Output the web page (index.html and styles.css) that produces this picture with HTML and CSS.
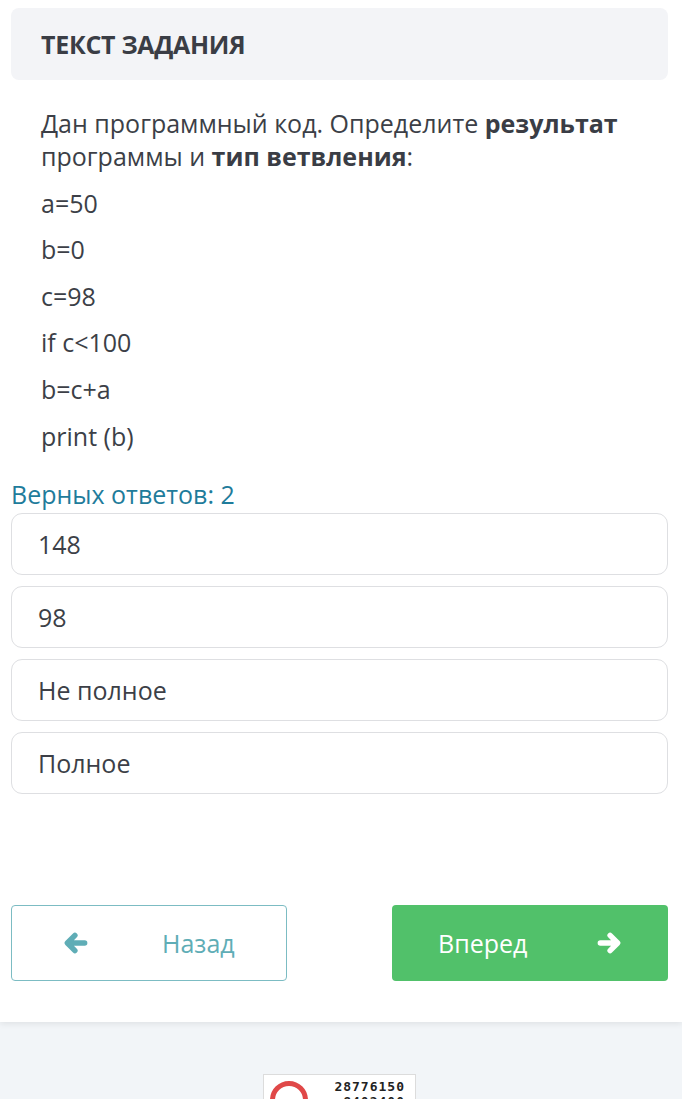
FILE: index.html
```html
<!DOCTYPE html>
<html lang="ru">
<head>
<meta charset="utf-8">
<title>Текст задания</title>
<link rel="stylesheet" href="styles.css">
</head>
<body>
<div class="page">
  <div class="task-head"><h1>ТЕКСТ ЗАДАНИЯ</h1></div>
  <div class="task-body">
    <p>Дан программный код. Определите <b>результат</b> программы и <b>тип ветвления</b>:</p>
    <p>a=50</p>
    <p>b=0</p>
    <p>c=98</p>
    <p>if c&lt;100</p>
    <p>b=c+a</p>
    <p>print (b)</p>
  </div>
  <div class="answers-count">Верных ответов: 2</div>
  <div class="options">
    <div class="option">148</div>
    <div class="option">98</div>
    <div class="option">Не полное</div>
    <div class="option">Полное</div>
  </div>
  <div class="nav">
    <button class="btn btn-back">
      <svg class="arrow" viewBox="0 0 24 24" width="26" height="26"><path d="M20 12H5M11 5L4 12L11 19" fill="none" stroke="currentColor" stroke-width="5" stroke-linecap="round" stroke-linejoin="round"/></svg>
      <span>Назад</span>
    </button>
    <button class="btn btn-next">
      <span>Вперед</span>
      <svg class="arrow" viewBox="0 0 24 24" width="26" height="26"><path d="M4 12H19M13 5L20 12L13 19" fill="none" stroke="currentColor" stroke-width="5" stroke-linecap="round" stroke-linejoin="round"/></svg>
    </button>
  </div>
</div>
<div class="footer">
  <div class="counter">
    <span class="ring"></span>
    <span class="nums">28776150<br>8402400</span>
  </div>
</div>
</body>
</html>
```
FILE: styles.css
```css
* { box-sizing: border-box; }
html, body { margin: 0; padding: 0; }
body {
  background: #f2f5f8;
  font-family: "Open Sans", "Noto Sans", sans-serif;
  color: #3c3f47;
  overflow: hidden;
  height: 1099px;
}
.page {
  background: #fff;
  padding: 8px 14px 41px 11px;
  box-shadow: 0 2px 6px rgba(0,0,0,0.08);
  position: relative;
}
.task-head {
  background: #f3f4f7;
  border-radius: 8px;
  height: 72px;
  display: flex;
  align-items: center;
  padding-left: 30px;
}
.task-head h1 {
  margin: 0;
  font-size: 25px;
  font-weight: 700;
  color: #3a3d45;
  letter-spacing: -0.3px;
}
.task-body {
  padding: 27px 30px 0 30px;
}
.task-body p {
  margin: 0 0 13.6px 0;
  font-size: 25px;
  line-height: 33px;
}
.task-body p:last-child { margin-bottom: 0; }
.task-body b { font-weight: 700; color: #3a3d45; }
.answers-count {
  margin-top: 25px;
  font-size: 25px;
  line-height: 33px;
  color: #1f7c9b;
}
.options {
  margin-top: 2.5px;
  display: flex;
  flex-direction: column;
  gap: 11px;
}
.option {
  height: 62px;
  border: 1px solid #dedfe2;
  border-radius: 11px;
  display: flex;
  align-items: center;
  padding-left: 26px;
  font-size: 25px;
  color: #3c3f47;
}
.nav {
  margin-top: 111px;
  display: flex;
  justify-content: space-between;
}
.btn {
  height: 76px;
  width: 276px;
  border-radius: 4px;
  font-family: inherit;
  font-size: 25px;
  display: flex;
  align-items: center;
  cursor: pointer;
}
.btn-back {
  background: #fff;
  border: 1px solid #7cbcc3;
  color: #5fadb6;
  padding: 0 0 0 51px;
}
.btn-back span { margin-left: 73px; }
.btn-next {
  background: #51c16a;
  border: none;
  color: #fff;
  padding: 0 0 0 46px;
}
.btn-next .arrow { margin-left: 69px; }
.footer {
  padding-top: 52px;
  display: flex;
  justify-content: center;
}
.counter {
  margin-left: -3px;
  width: 153px;
  height: 60px;
  background: #fff;
  border: 1px solid #dcdcdc;
  display: flex;
  align-items: flex-start;
  padding: 4px 10px 4px 6px;
}
.ring {
  width: 38px;
  height: 38px;
  border: 5px solid #e04848;
  border-radius: 50%;
  margin-top: 2px;
}
.nums {
  margin-left: auto;
  font-family: "DejaVu Sans Mono", monospace;
  font-size: 13px;
  font-weight: 700;
  line-height: 15px;
  letter-spacing: 1px;
  text-align: right;
  color: #222;
}
```
